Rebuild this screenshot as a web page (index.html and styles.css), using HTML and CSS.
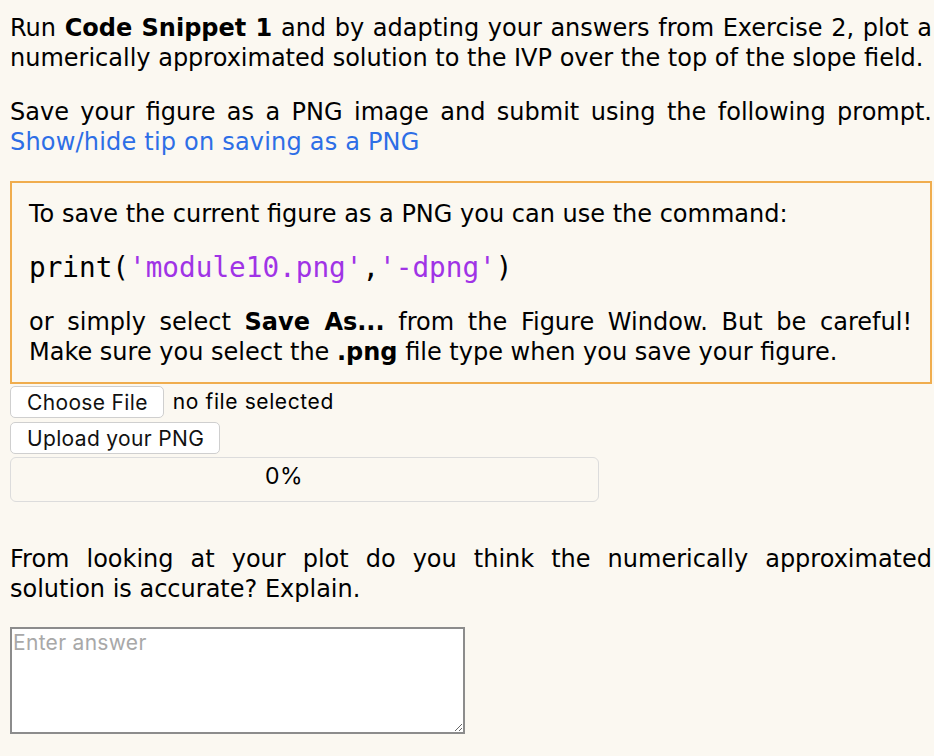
FILE: index.html
```html
<!DOCTYPE html>
<html lang="en">
<head>
<meta charset="utf-8">
<title>Exercise</title>
<link rel="stylesheet" href="styles.css">
</head>
<body>
<div class="page">
  <p class="q">Run <b>Code Snippet 1</b> and by adapting your answers from Exercise 2, plot a numerically approximated solution to the IVP over the top of the slope field.</p>
  <p class="q">Save your figure as a PNG image and submit using the following prompt. <a class="tip-link" href="#">Show/hide tip on saving as a PNG</a></p>
  <div class="tip">
    <p class="tip-text">To save the current figure as a PNG you can use the command:</p>
    <pre class="code">print(<span class="str">'module10.png'</span>,<span class="str">'-dpng'</span>)</pre>
    <p class="tip-text">or simply select <b>Save As...</b> from the Figure Window. But be careful! Make sure you select the <b>.png</b> file type when you save your figure.</p>
  </div>
  <div class="upload">
    <div class="file-row"><button class="btn" type="button">Choose File</button><span class="file-name">no file selected</span></div>
    <div class="file-row"><button class="btn" type="button">Upload your PNG</button></div>
    <div class="progress"><span class="progress-label">0%</span></div>
  </div>
  <p class="q question">From looking at your plot do you think the numerically approximated solution is accurate? Explain.</p>
  <textarea class="answer" placeholder="Enter answer"></textarea>
</div>
</body>
</html>
```
FILE: styles.css
```css
html, body {
  margin: 0;
  padding: 0;
  background: #fbf8f1;
}

.page {
  padding: 13px 2px 20px 10px;
  font-family: "DejaVu Sans", Verdana, sans-serif;
  font-size: 24px;
  line-height: 30px;
  color: #000;
}

.q {
  margin: 0 0 24px;
  text-align: justify;
}

.tip-link {
  color: #2d6ee6;
  text-decoration: none;
  letter-spacing: 0.2px;
}

.tip {
  border: 2px solid #f0ad4e;
  padding: 16px 18px 15px 17px;
}

.tip-text {
  margin: 0;
  text-align: justify;
}

.code {
  margin: 23px 0;
  font-family: "DejaVu Sans Mono", Menlo, monospace;
  font-size: 27.7px;
  line-height: 32px;
  color: #000;
}

.str {
  color: #a033e6;
}

.upload {
  margin-top: 2px;
  display: flex;
  flex-direction: column;
  gap: 4px;
  font-family: Inter, "Liberation Sans", sans-serif;
  font-size: 21px;
}

.file-row {
  display: flex;
  align-items: center;
  height: 32px;
}

.btn {
  box-sizing: border-box;
  height: 32px;
  padding: 0 15px 0 16px;
  border: 1px solid #cfcfcf;
  border-radius: 5px;
  background: #fff;
  font-family: Inter, "Liberation Sans", sans-serif;
  font-size: 21px;
  letter-spacing: 0.35px;
  color: #111;
}

.file-name {
  margin-left: 9px;
  letter-spacing: 0.6px;
  color: #000;
}

.progress {
  box-sizing: border-box;
  width: 589px;
  height: 45px;
  margin-top: -1px;
  padding: 4px 41px 0 0;
  border: 1px solid #dcdcdc;
  border-radius: 6px;
  text-align: center;
}

.progress-label {
  font-size: 23px;
  line-height: 26px;
  letter-spacing: 0.5px;
  color: #000;
}

.question {
  margin: 42px 0 23px;
}

.answer {
  display: block;
  box-sizing: border-box;
  width: 455px;
  height: 107px;
  margin: 0;
  padding: 1px;
  border: 2px solid #8c8c8c;
  background: #fff;
  font-family: Inter, "Liberation Sans", sans-serif;
  font-size: 21px;
  letter-spacing: 0.3px;
}

.answer::placeholder {
  color: #a8a8a8;
}
```
